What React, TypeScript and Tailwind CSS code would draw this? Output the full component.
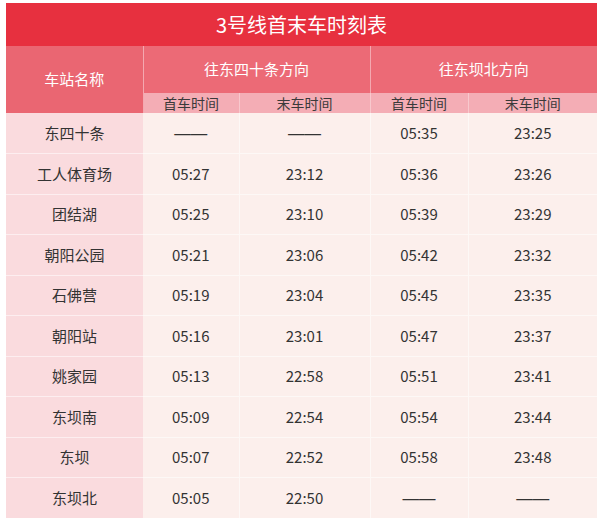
import React from 'react';

type Row = [string, string, string, string, string];

const rows: Row[] = [
  ['东四十条', '——', '——', '05:35', '23:25'],
  ['工人体育场', '05:27', '23:12', '05:36', '23:26'],
  ['团结湖', '05:25', '23:10', '05:39', '23:29'],
  ['朝阳公园', '05:21', '23:06', '05:42', '23:32'],
  ['石佛营', '05:19', '23:04', '05:45', '23:35'],
  ['朝阳站', '05:16', '23:01', '05:47', '23:37'],
  ['姚家园', '05:13', '22:58', '05:51', '23:41'],
  ['东坝南', '05:09', '22:54', '05:54', '23:44'],
  ['东坝', '05:07', '22:52', '05:58', '23:48'],
  ['东坝北', '05:05', '22:50', '——', '——'],
];

const font = { fontFamily: '"Noto Sans CJK SC", "Noto Sans", sans-serif' };

export default function App() {
  return (
    <div className="w-[600px] h-[522px] bg-white pt-[3px] pl-[6px]" style={font}>
      <div className="w-[591px]">
        <div className="h-[43px] bg-[#e7303f] flex items-center justify-center text-white text-[20px]">
          3号线首末车时刻表
        </div>
        <table className="w-full border-collapse table-fixed">
          <colgroup>
            <col className="w-[137px]" />
            <col className="w-[96px]" />
            <col className="w-[131px]" />
            <col className="w-[98px]" />
            <col className="w-[129px]" />
          </colgroup>
          <thead>
            <tr className="h-[47px]">
              <th rowSpan={2} className="bg-[#ea6672] text-white font-normal text-[15px] border-r border-[#f4a8b0]">
                车站名称
              </th>
              <th colSpan={2} className="bg-[#ec6a76] text-white font-normal text-[15px] border-r border-[#f4a8b0]">
                往东四十条方向
              </th>
              <th colSpan={2} className="bg-[#ec6a76] text-white font-normal text-[15px]">
                往东坝北方向
              </th>
            </tr>
            <tr className="h-[20px] bg-[#f4adb5] text-[#3a3a3a] text-[14px] leading-none">
              <th className="font-normal border-r border-[#f8c8cd]">首车时间</th>
              <th className="font-normal border-r border-[#f8c8cd]">末车时间</th>
              <th className="font-normal border-r border-[#f8c8cd]">首车时间</th>
              <th className="font-normal">末车时间</th>
            </tr>
          </thead>
          <tbody>
            {rows.map((r, i) => (
              <tr key={i} className="h-[40.5px] text-[15px] text-[#333]">
                <td className={`bg-[#fadbde] text-center ${i > 0 ? 'border-t border-[#fdeef0]' : ''}`}>{r[0]}</td>
                {r.slice(1).map((v, j) => (
                  <td
                    key={j}
                    className={`bg-[#fcefec] text-center ${j < 3 ? 'border-r border-[#fdf8f6]' : ''} ${i > 0 ? 'border-t border-[#fdf8f6]' : ''}`}
                  >
                    {v === '——' ? (
                      <span className="text-[16.5px] font-['Liberation_Sans',sans-serif]">——</span>
                    ) : (
                      v
                    )}
                  </td>
                ))}
              </tr>
            ))}
          </tbody>
        </table>
      </div>
    </div>
  );
}
